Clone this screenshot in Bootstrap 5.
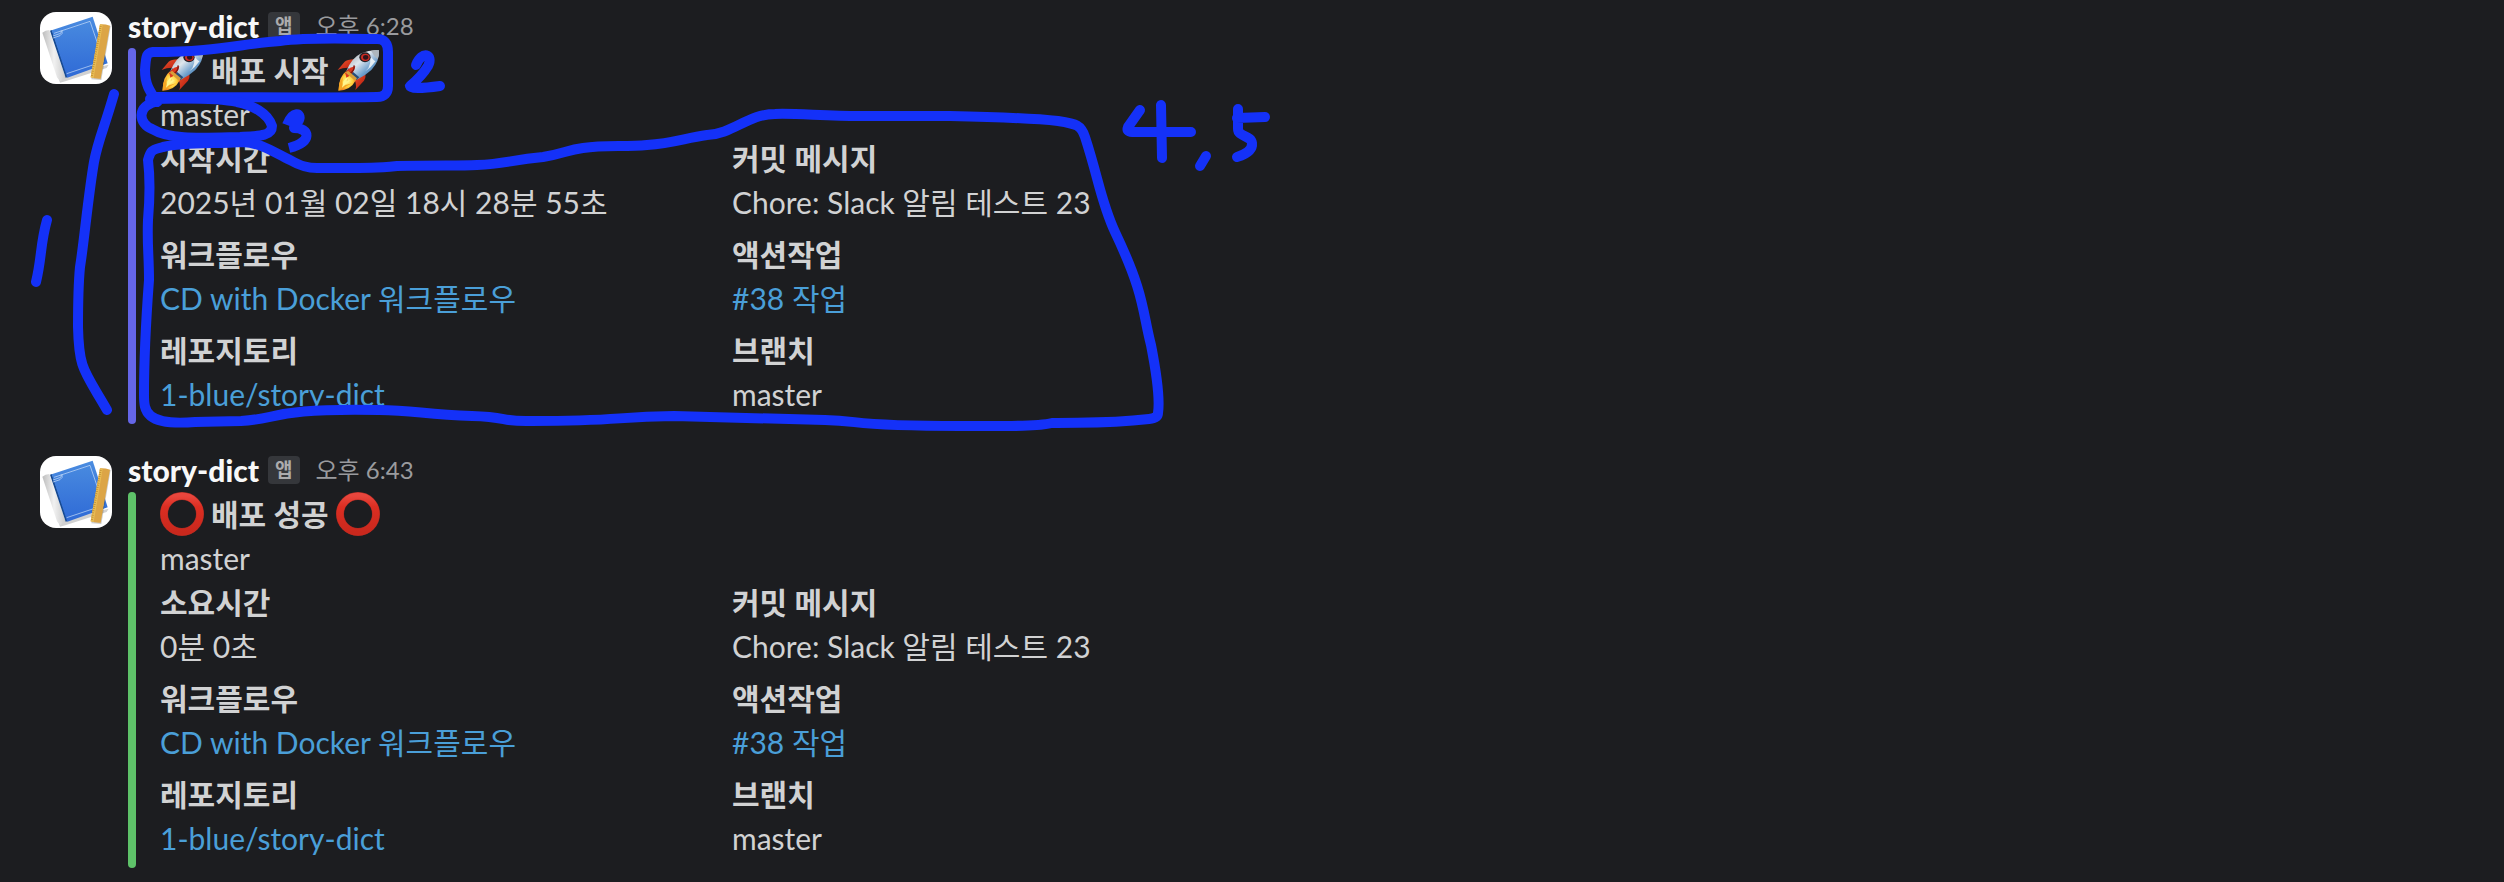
<!DOCTYPE html>
<html lang="ko" data-bs-theme="dark">
<head>
<meta charset="utf-8">
<meta name="viewport" content="width=device-width, initial-scale=1">
<title>story-dict</title>
<link rel="stylesheet" href="https://cdn.jsdelivr.net/npm/bootstrap@5.3.0/dist/css/bootstrap.min.css">
<style>
  body {
    background: #1c1d20;
    color: #d1d2d3;
    font-family: Lato, "Noto Sans CJK KR", sans-serif;
    font-size: 30px;
    line-height: 44px;
  }
  .feed { padding: 4px 40px 0; gap: 24px; }
  .message { gap: 16px; }
  .avatar { width: 72px; height: 72px; margin-top: 8px; border-radius: 16px; background: #fff; }
  .sender { font-weight: 900; color: #f8f8f8; }
  .app-tag {
    margin-left: 9px; padding: 0 7px; border-radius: 4px;
    background: #35373b; color: #ababad;
    font-size: 19px; font-weight: 700; line-height: 28px;
  }
  .sent-at { margin-left: 16px; font-size: 24px; color: #9a9b9e; }
  .attachment { gap: 24px; }
  .accent { width: 8px; border-radius: 8px; }
  .accent-start { background: #6566e8; }
  .accent-success { background: #5ec269; }
  .attachment-text { padding-bottom: 8px; }
  .headline { gap: 7px; font-size: 30px; line-height: 44px; color: inherit; }
  .emoji { width: 44px; height: 44px; }
  .fields { display: grid; grid-template-columns: repeat(2, minmax(0, 572px)); row-gap: 8px; }
  .fields a { color: #4a9fd8; }
  .fields dt, .headline { font-weight: 700; }
  .pen { width: 1300px; height: 440px; pointer-events: none; }
</style>
</head>
<body>
<svg class="position-absolute" width="0" height="0" aria-hidden="true">
  <defs>
    <linearGradient id="cover" x1="0" y1="0" x2="0" y2="1"><stop offset="0" stop-color="#4a8ce0"/><stop offset="1" stop-color="#2f6ad6"/></linearGradient>
    <linearGradient id="pages" x1="0" y1="0" x2="1" y2="0"><stop offset="0" stop-color="#bdbdbd"/><stop offset=".5" stop-color="#f1f1f1"/><stop offset="1" stop-color="#c9c9c9"/></linearGradient>
    <linearGradient id="hull" x1="0" y1="0" x2="1" y2="1"><stop offset="0" stop-color="#8a949e"/><stop offset=".4" stop-color="#dfe6ec"/><stop offset=".65" stop-color="#6d9fcd"/><stop offset="1" stop-color="#24507f"/></linearGradient>
    <linearGradient id="fin" x1="0" y1="0" x2="1" y2="1"><stop offset="0" stop-color="#f0582f"/><stop offset="1" stop-color="#b3170c"/></linearGradient>
    <radialGradient id="fire"><stop offset="0" stop-color="#fff79a"/><stop offset=".6" stop-color="#ffd23c"/><stop offset="1" stop-color="#f08a24"/></radialGradient>
    <linearGradient id="ring" x1="0" y1="0" x2="0" y2="1"><stop offset="0" stop-color="#e8463d"/><stop offset=".3" stop-color="#dc2e22"/><stop offset="1" stop-color="#c9281d"/></linearGradient>
  </defs>
  <symbol id="book" viewBox="0 0 216 216">
    <path d="M12 70 60 212 76 208 200 168 206 158 70 190Z" fill="#000" opacity=".18"/>
    <path d="M7 62Q16 54 28 54L77 197Q68 199 62 208Q55 203 51 196Z" fill="url(#pages)"/>
    <path d="M30 56 36 54 84 195 77 197Z" fill="#174a91"/>
    <path d="M35 55 158 14 203 154 82 197Z" fill="url(#cover)"/>
    <path d="M42 64 150 28 191 148 80 185M39 72 62 64Q65 60 63 56M39 78 60 71Q70 65 66 55" fill="none" stroke="#cfe2fa" stroke-width="2"/>
    <path d="M181 40 212 42 184 204 154 202Z" fill="#000" opacity=".2"/>
    <path d="M180 37Q195 36 210 41L182 200Q165 201 152 196Z" fill="#dca546"/>
    <path d="M180 37 188 38 161 198 152 196Z" fill="#e8bc54"/>
    <path d="M182 42 155 195" stroke="#a97422" stroke-width="6" stroke-dasharray="1.5 5" fill="none"/>
  </symbol>
  <symbol id="rocket" viewBox="0 0 132 132">
    <path d="M5 66 26 41Q32 35 56 34L43 60Q24 58 5 66Z" fill="url(#fin)"/>
    <path d="M50 86 82 70Q94 84 84 98L58 126Q65 106 50 86Z" fill="url(#fin)"/>
    <path d="M30 70Q8 86 8 128Q44 127 60 96L52 79Z" fill="url(#fire)"/>
    <path d="M10 105 21 88 18 108 36 93 27 112 48 106 7 128Z" fill="#f5a623"/>
    <path d="M22 100 36 83 32 100 45 95 18 119Z" fill="#fff68d"/>
    <path d="M31 70Q46 30 76 16Q103 4 129 7Q131 40 106 66Q88 83 61 96Z" fill="url(#hull)"/>
    <path d="M105 8Q119 5 129 7Q130 22 125 34Q112 22 105 8Z" fill="#adb6bd"/>
    <path d="M98 17Q113 39 119 39Q106 58 88 70Q112 48 98 17Z" fill="#f6f8f9" opacity=".85"/>
    <ellipse cx="87" cy="28" rx="17" ry="15" fill="#231f25"/>
    <ellipse cx="88" cy="28" rx="13" ry="11" fill="#cd2b22"/>
    <ellipse cx="89" cy="28" rx="8" ry="7" fill="#30131a"/>
    <path d="M31 70 38 61 70 88 61 96Z" fill="#294d79"/>
    <path d="M28 76Q34 60 58 54Q54 78 31 89Z" fill="#dc351d"/>
    <path d="M54 52Q57 68 40 78" stroke="#7a1711" stroke-width="4" fill="none"/>
    <path d="M29 74 36 68 63 91 57 98Z" fill="#d89d39"/>
  </symbol>
  <symbol id="circle" viewBox="0 0 132 132">
    <circle cx="66" cy="66" r="54" fill="none" stroke="#a52a22" stroke-width="24"/>
    <circle cx="66" cy="66" r="54" fill="none" stroke="url(#ring)" stroke-width="21"/>
  </symbol>
</svg>

<main class="position-relative overflow-hidden">
  <div class="feed d-flex flex-column">
    <article class="message d-flex">
      <svg class="avatar flex-shrink-0" role="img" aria-label="story-dict"><use href="#book"/></svg>
      <div class="flex-grow-1">
        <header class="d-flex align-items-center">
          <span class="sender">story-dict</span><span class="app-tag">앱</span><time class="sent-at" datetime="18:28">오후 6:28</time>
        </header>
        <div class="attachment d-flex">
          <div class="accent accent-start"></div>
          <div class="attachment-text flex-grow-1">
            <h2 class="headline d-flex mb-0"><svg class="emoji" aria-hidden="true"><use href="#rocket"/></svg><span>배포 시작</span><svg class="emoji" aria-hidden="true"><use href="#rocket"/></svg></h2>
            <p class="mb-0">master</p>
            <dl class="fields mb-0">
              <div><dt>시작시간</dt><dd class="mb-0">2025년 01월 02일 18시 28분 55초</dd></div>
              <div><dt>커밋 메시지</dt><dd class="mb-0">Chore: Slack 알림 테스트 23</dd></div>
              <div><dt>워크플로우</dt><dd class="mb-0"><a href="#" class="text-decoration-none">CD with Docker 워크플로우</a></dd></div>
              <div><dt>액션작업</dt><dd class="mb-0"><a href="#" class="text-decoration-none">#38 작업</a></dd></div>
              <div><dt>레포지토리</dt><dd class="mb-0"><a href="#" class="text-decoration-none">1-blue/story-dict</a></dd></div>
              <div><dt>브랜치</dt><dd class="mb-0">master</dd></div>
            </dl>
          </div>
        </div>
      </div>
    </article>

    <article class="message d-flex">
      <svg class="avatar flex-shrink-0" role="img" aria-label="story-dict"><use href="#book"/></svg>
      <div class="flex-grow-1">
        <header class="d-flex align-items-center">
          <span class="sender">story-dict</span><span class="app-tag">앱</span><time class="sent-at" datetime="18:43">오후 6:43</time>
        </header>
        <div class="attachment d-flex">
          <div class="accent accent-success"></div>
          <div class="attachment-text flex-grow-1">
            <h2 class="headline d-flex mb-0"><svg class="emoji" aria-hidden="true"><use href="#circle"/></svg><span>배포 성공</span><svg class="emoji" aria-hidden="true"><use href="#circle"/></svg></h2>
            <p class="mb-0">master</p>
            <dl class="fields mb-0">
              <div><dt>소요시간</dt><dd class="mb-0">0분 0초</dd></div>
              <div><dt>커밋 메시지</dt><dd class="mb-0">Chore: Slack 알림 테스트 23</dd></div>
              <div><dt>워크플로우</dt><dd class="mb-0"><a href="#" class="text-decoration-none">CD with Docker 워크플로우</a></dd></div>
              <div><dt>액션작업</dt><dd class="mb-0"><a href="#" class="text-decoration-none">#38 작업</a></dd></div>
              <div><dt>레포지토리</dt><dd class="mb-0"><a href="#" class="text-decoration-none">1-blue/story-dict</a></dd></div>
              <div><dt>브랜치</dt><dd class="mb-0">master</dd></div>
            </dl>
          </div>
        </div>
      </div>
    </article>
  </div>

  <!-- Pen marks numbering the parts of the first message -->
  <svg class="pen position-absolute top-0 start-0" viewBox="0 0 1300 440" fill="none" stroke="#1431f8" stroke-width="10" stroke-linecap="round" stroke-linejoin="round" role="img" aria-label="1, 2, 3, 4, 5">
    <path d="M47 220C40 245 42 257 36 282"/>
    <path d="M114 94C104 129 98 140 94 162C88 197 84 243 80 267C78 288 78 318 78 327C79 370 84 370 107 410"/>
    <path d="M157 102C149 90 145 84 145 70C146 54 147 53 153 52C215 52 240 44 280 41C312 37 345 39 377 39Q388 39 388 52L388 86Q388 97 377 97C320 98 240 97 157 97"/>
    <path d="M416 65C422 50 434 54 428 66Q422 76 410 86Q411 90 440 86"/>
    <path d="M158 101C135 106 139 124 152 129C170 140 200 138 240 137C260 136 272 136 272 126C268 113 252 105 237 102C220 98 188 98 150 99"/>
    <path stroke-linecap="butt" d="M287 125C293 110 302 113 299 120L294 128C310 128 313 142 289 148"/>
    <path d="M148 160C151 149 153 150 163 147C185 142 210 144 243 142C262 143 275 153 290 160C302 167 309 168 317 168C375 168 377 168 397 166C440 165 458 166 477 165C505 164 510 160 543 157C563 154 567 150 583 148C605 145 625 147 647 145C674 143 685 138 707 135C733 134 748 114 775 114C793 113 825 116 859 116L950 116C1000 117 1040 119 1058 121C1077 124 1081 125 1085 137C1099 180 1101 202 1115 232C1145 295 1142 310 1151 345C1158 381 1160 400 1158 413Q1158 418 1149 419C1105 424 1080 422 1052 423C1036 427 1000 426 960 426C850 426 865 421 825 420C790 419 752 418 674 416C610 417 622 421 532 421C500 422 510 417 472 416C425 415 415 410 379 410C270 408 280 419 241 421L195 422C145 426 144 411 144 395C144 370 146 320 149 280C149 255 147 245 148 220Q151 185 148 160"/>
    <path d="M1140 110 1128 127Q1126 132 1132 132L1191 132M1161 105 1162 158M1206 156 1200 166"/>
    <path d="M1238 109 1238 129C1238 137 1251 135 1252 143Q1253 152 1237 157M1237 118 1265 117"/>
  </svg>
</main>
<script src="https://cdn.jsdelivr.net/npm/bootstrap@5.3.0/dist/js/bootstrap.bundle.min.js"></script>
</body>
</html>
